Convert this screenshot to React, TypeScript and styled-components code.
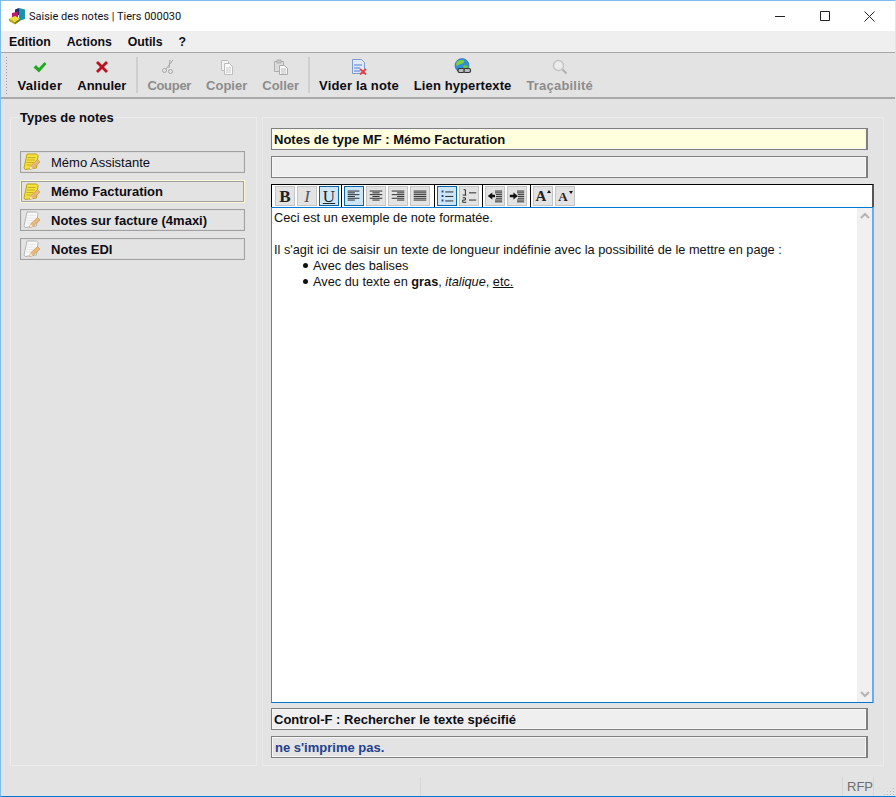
import React from 'react';
import styled, { createGlobalStyle } from 'styled-components';

const GlobalStyle = createGlobalStyle`
  html, body {
    margin: 0;
    padding: 0;
    background: #e3e3e3;
  }
  * {
    box-sizing: border-box;
  }
`;

const LogoIcon = () => (
  <svg width="17" height="18" viewBox="0 0 17 18">
    <path d="M10 1l6 1.500V12l-6 2z" fill="#1b93ad" />
    <path d="M6 2.500L10 1v7L6 9.500z" fill="#1d2f66" />
    <path d="M3 6l6-1.500V11l-6 2.500z" fill="#c0176c" />
    <path d="M0 11.500L6 9l5 2.500L6 15z" fill="#efe034" />
    <path d="M0 11.500L6 15v2.500L0 14z" fill="#b3a61d" />
    <path d="M6 15l5-3.500v2.500l-5 3.500z" fill="#857c12" />
  </svg>
);

const CheckIcon = () => (
  <svg width="16" height="16" viewBox="0 0 16 16">
    <path d="M1.500 8.500l2.500-2.500 3 3 5.500-6 2 2-7.500 8.500z" fill="#1faa1f" />
  </svg>
);

const CrossIcon = () => (
  <svg width="16" height="16" viewBox="0 0 16 16">
    <path d="M2 4l2-2 4 4 4-4 2 2-4 4 4 4-2 2-4-4-4 4-2-2 4-4z" fill="#b81420" />
  </svg>
);

const ScissorsIcon = () => (
  <svg width="16" height="16" viewBox="0 0 16 16" fill="none" stroke="#a6a6a6">
    <path d="M9 1l-1 8M12 1L5 10" />
    <circle cx="3.500" cy="11.500" r="2" />
    <circle cx="9.500" cy="12.500" r="2" />
  </svg>
);

const CopyIcon = () => (
  <svg width="16" height="16" viewBox="0 0 16 16" fill="#f2f2f2" stroke="#bdbdbd">
    <path d="M2.500 1.500h6l1 1v9h-7z" />
    <path d="M5.500 4.500h5l3 3v8h-8z" fill="#fafafa" />
    <path d="M7 9h5M7 11h5M7 13h5" strokeWidth="0.8" />
  </svg>
);

const PasteIcon = () => (
  <svg width="16" height="16" viewBox="0 0 16 16" fill="#dcdcdc" stroke="#adadad">
    <path d="M1.500 2.500h9v10h-9z" />
    <path d="M4 1h4v3H4z" fill="#c8c8c8" />
    <path d="M6.500 6.500h5l3 3v6h-8z" fill="#fafafa" />
    <path d="M8 10h5M8 12h5M8 14h5" strokeWidth="0.8" />
  </svg>
);

const ClearNoteIcon = () => (
  <svg width="16" height="16" viewBox="0 0 16 16">
    <path d="M1.500 .500h9l3 3v11h-12z" fill="#dfe8f8" stroke="#7f9bd0" />
    <path d="M3 6h8M3 9h6M3 12h6" stroke="#4f7fd8" strokeWidth="1.200" />
    <path d="M9 10l6 5.500M15 10l-6 5.500" stroke="#e8403c" strokeWidth="1.800" />
  </svg>
);

const LinkIcon = () => (
  <svg width="18" height="18" viewBox="0 0 18 18">
    <circle cx="8" cy="7.500" r="7" fill="#2f8fd8" stroke="#2a6f9f" strokeWidth="0.600" />
    <path d="M3 3.500c2-1.500 5-2 7-1 1 1.500-1 3-3 3.500S3 8 2.500 8C2 7 2 5 3 3.500z" fill="#7fd03a" />
    <path d="M10 7c2 0 3.500 .5 4 1.500-1 2-2.500 3-4 3.500-1-1-1-3.500 0-5z" fill="#6cc336" />
    <rect x="4" y="10.500" width="6.500" height="4" rx="1.500" fill="#b8bcc0" stroke="#333" strokeWidth="1.200" />
    <rect x="10" y="10.500" width="6.500" height="4" rx="1.500" fill="#b8bcc0" stroke="#333" strokeWidth="1.200" />
  </svg>
);

const LoupeIcon = () => (
  <svg width="16" height="16" viewBox="0 0 16 16">
    <circle cx="6.500" cy="6.500" r="5" fill="#ececec" stroke="#c4c4c4" strokeWidth="1.500" />
    <path d="M10.500 10.500l4 4" stroke="#b0b0b0" strokeWidth="2" />
  </svg>
);

const NoteIcon = ({ fill, edge, line }: { fill: string; edge: string; line: string }) => (
  <svg width="18" height="18" viewBox="0 0 18 18">
    <path d="M4 1h9.500l1.500 1.500-1.500 12.500-11.500 1.500L1 15z" fill={fill} stroke={edge} />
    <path d="M4.500 4.500h8M4 7h8M3.500 9.500h7M3.500 12h5" stroke={line} strokeWidth="0.800" />
    <path d="M6.500 16.500l1-3.500 7-6.500 2.500 2.500-7 6.500z" fill="#e8b878" stroke="#c8965c" strokeWidth="0.700" />
    <path d="M6.500 16.500l1-3.500 2.500 2.500z" fill="#f5e3c8" />
  </svg>
);

const GlyphLines = ({ kind }: { kind: 'left' | 'center' | 'right' | 'justify' }) => {
  const rows =
    kind === 'left'
      ? ['M3 4.500h13', 'M3 6.500h8', 'M3 8.500h13', 'M3 10.500h8', 'M3 12.500h13', 'M3 14.500h8']
      : kind === 'center'
        ? ['M3 4.500h14', 'M6 6.500h8', 'M3 8.500h14', 'M6 10.500h8', 'M3 12.500h14', 'M6 14.500h8']
        : kind === 'right'
          ? ['M3 4.500h14', 'M9 6.500h8', 'M3 8.500h14', 'M9 10.500h8', 'M3 12.500h14', 'M9 14.500h8']
          : ['M3 4.500h14', 'M3 6.500h14', 'M3 8.500h14', 'M3 10.500h14', 'M3 12.500h14', 'M3 14.500h14'];
  return (
    <svg width="18" height="18" viewBox="0 0 20 20" stroke="#1a1a1a" strokeWidth="1">
      {rows.map((d) => (
        <path key={d} d={d} />
      ))}
    </svg>
  );
};

const BulletsGlyph = () => (
  <svg width="20" height="20" viewBox="0 0 20 20">
    <path d="M8 5.500h9M8 10.500h9M8 15.500h9" stroke="#1a1a1a" />
    <path d="M4 4h2v2H4zM4 9h2v2H4zM4 14h2v2H4z" fill="#1f3f8f" />
  </svg>
);

const NumbersGlyph = () => (
  <svg width="20" height="20" viewBox="0 0 20 20">
    <path d="M10 6.500h8M10 14.500h8" stroke="#1a1a1a" />
    <path d="M4 3h2v6M3 9h4" stroke="#1a1a1a" fill="none" />
    <path d="M3 12h3v2.500H3V17h4" stroke="#1a1a1a" fill="none" />
  </svg>
);

const IndentGlyph = ({ out }: { out?: boolean }) => (
  <svg width="20" height="20" viewBox="0 0 20 20">
    <path d="M10 4.500h8M10 6.500h8M11 8.500h7M11 10.500h7M11 12.500h7M10 14.500h8M10 16.500h8" stroke="#1a1a1a" />
    {out ? (
      <path d="M2 10l5-4v2.500h3v3H7V14z" fill="#111" />
    ) : (
      <path d="M11 10L6 6v2.500H2v3h4V14z" fill="#111" />
    )}
  </svg>
);

const Window = styled.div`
  display: flex;
  flex-direction: column;
  width: 896px;
  height: 797px;
  overflow: hidden;
  background: #e3e3e3;
  border-top: 1px solid #7fbcec;
  border-bottom: 1px solid #0078d7;
  border-left: 1px solid #7fbcec;
  border-right: 1px solid #e3e3e3;
  font-family: 'Liberation Sans', Arial, sans-serif;
  color: #0c0c14;
`;

const TitleBar = styled.div`
  display: flex;
  align-items: center;
  height: 30px;
  flex: none;
  padding: 0 3px 0 8px;
  background: #fff;
`;

const WindowTitle = styled.span`
  margin-left: 3px;
  flex: 1;
  font-family: Roboto, sans-serif;
  font-size: 11px;
  color: #111;
`;

const WindowButton = styled.span`
  display: flex;
  align-items: center;
  justify-content: center;
  width: 45px;
  height: 30px;
`;

const MenuBar = styled.nav`
  display: flex;
  align-items: center;
  gap: 16px;
  height: 21px;
  flex: none;
  padding-left: 8px;
  background: #efefef;
  font-size: 12.3px;
  font-weight: bold;
  border-bottom: 1px solid #a8a8a8;
  box-sizing: content-box;
`;

const ToolBar = styled.div`
  display: flex;
  align-items: center;
  flex: none;
  height: 46px;
  padding-left: 4px;
  background: #e3e3e3;
  border-bottom: 2px solid #a9a9a9;
`;

const Grip = styled.span`
  width: 3px;
  height: 38px;
  margin-right: 2px;
  background-image: radial-gradient(#9a9a9a 0.8px, transparent 1px);
  background-size: 3px 3px;
`;

const ToolButton = styled.div<{ $disabled?: boolean; $tracking?: number }>`
  display: flex;
  flex-direction: column;
  align-items: center;
  gap: 1px;
  padding: 0 7.5px;
  font-size: 13px;
  font-weight: bold;
  line-height: 16px;
  letter-spacing: ${(p) => p.$tracking ?? 0}px;
  color: ${(p) => (p.$disabled ? '#8c8c8c' : '#0c0c14')};
`;

const ToolIcon = styled.span`
  display: flex;
  align-items: center;
  justify-content: center;
  height: 20px;
`;

const ToolSeparator = styled.span`
  width: 2px;
  height: 36px;
  margin: 0 2px;
  background: #cfcfcf;
`;

const Main = styled.main`
  display: flex;
  flex: 1;
  min-height: 0;
  gap: 5px;
  padding: 9px 11px 4px 9px;
`;

const TypesPanel = styled.fieldset`
  display: flex;
  flex-direction: column;
  width: 247px;
  flex: none;
  min-width: 0;
  margin: 0;
  padding: 25px 11px 0 9px;
  border: 1px solid #ebebeb;
`;

const PanelLegend = styled.legend`
  padding: 2px 0 0;
  margin-left: 0;
  font-size: 13px;
  font-weight: bold;
  line-height: 16px;
`;

const NoteList = styled.div`
  display: flex;
  flex-direction: column;
  gap: 7px;
`;

const NoteButton = styled.div<{ $selected?: boolean; $bold?: boolean }>`
  display: flex;
  align-items: center;
  gap: 10px;
  height: ${(p) => (p.$selected ? 23 : 22)}px;
  margin-bottom: ${(p) => (p.$selected ? -1 : 0)}px;
  padding-left: 2px;
  border: 1px solid ${(p) => (p.$selected ? '#fbf8d8' : '#a0a0a0')};
  box-shadow: ${(p) => (p.$selected ? 'inset 0 0 0 1px #a0a0a0' : 'inset 0 0 0 1px #dcdcdc')};
  font-size: 13px;
  font-weight: ${(p) => (p.$bold ? 'bold' : 'normal')};
`;

const EditorPanel = styled.section`
  display: flex;
  flex-direction: column;
  flex: 1;
  min-width: 0;
  margin-top: 9px;
  padding: 10px 9px 1px 8px;
  border: 1px solid #ebebeb;
`;

const Field = styled.div<{ $bg?: string; $color?: string; $inset?: number }>`
  display: flex;
  align-items: center;
  flex: none;
  height: 22px;
  margin-right: 6px;
  margin-bottom: 6px;
  padding-left: ${(p) => p.$inset ?? 2}px;
  border: 1px solid #808080;
  border-right-width: 2px;
  box-shadow: inset 0 0 0 1px #f6f6f6;
  background: ${(p) => p.$bg || '#efefef'};
  color: ${(p) => p.$color || '#0c0c14'};
  font-size: 13px;
  font-weight: bold;
`;

const FormatBar = styled.div`
  display: flex;
  align-items: center;
  flex: none;
  height: 23px;
  padding-left: 3px;
  background: #fff;
  border: 1px solid #000;
  border-bottom: 0;
  border-right: 2px solid #555;
`;

const FormatButton = styled.span<{ $active?: boolean }>`
  display: flex;
  align-items: center;
  justify-content: center;
  width: 20px;
  height: 20px;
  margin-right: 2px;
  border: 1px solid ${(p) => (p.$active ? '#0a64a4' : '#c4c4c4')};
  background: ${(p) => (p.$active ? '#cde6f7' : '#e3e3e3')};
  font-family: 'Liberation Serif', serif;
  font-size: 17px;
  line-height: 1;
  color: #222;
`;

const FormatDivider = styled.span<{ $before?: number }>`
  width: 1px;
  height: 22px;
  margin: 0 2px 0 ${(p) => p.$before ?? 0}px;
  background: #000;
`;

const ItalicLetter = styled.i`
  color: #555;
`;

const UnderLetter = styled.u`
  color: #222;
`;

const SizeLetter = styled.b<{ $small?: boolean }>`
  position: relative;
  font-size: ${(p) => (p.$small ? 13 : 15)}px;
  margin-right: 4px;

  &::after {
    content: '';
    position: absolute;
    top: 1px;
    left: 100%;
    margin-left: 1px;
    border-left: 2px solid transparent;
    border-right: 2px solid transparent;
    ${(p) =>
      p.$small ? 'border-top: 3px solid #111;' : 'border-bottom: 3px solid #111;'}
  }
`;

const EditorBox = styled.div`
  display: flex;
  flex: 1;
  min-height: 0;
  margin-bottom: 5px;
  background: #fff;
  border: 1px solid #0078d7;
  border-left-color: #2f8fe0;
  border-right: 2px solid #6aaee6;
`;

const EditorText = styled.div`
  flex: 1;
  padding: 2px 0 0 2px;
  font-size: 12.75px;
  line-height: 16px;
  color: #111;
`;

const EditorLine = styled.div`
  min-height: 16px;
`;

const BulletList = styled.ul`
  margin: 0;
  padding: 0 0 0 29px;
  list-style: none;
`;

const BulletItem = styled.li`
  &::before {
    content: '';
    display: inline-block;
    width: 5px;
    height: 5px;
    margin: 0 5px 2px 0;
    border-radius: 50%;
    background: #111;
  }
`;

const Scrollbar = styled.div`
  display: flex;
  flex-direction: column;
  justify-content: space-between;
  align-items: center;
  width: 15px;
  flex: none;
  padding: 4px 0;
  background: #f0f0f0;
`;

const StatusBar = styled.footer`
  display: flex;
  align-items: stretch;
  flex: none;
  height: 26px;
  padding-top: 7px;
`;

const StatusCell = styled.span<{ $width?: number }>`
  display: flex;
  align-items: center;
  justify-content: flex-end;
  width: ${(p) => (p.$width ? `${p.$width}px` : 'auto')};
  flex: ${(p) => (p.$width ? 'none' : 1)};
  border-right: 1px solid #d6d6d6;
  font-size: 13px;
  color: #6e6e6e;
`;

const ResizeGrip = styled.span`
  width: 21px;
  flex: none;
  background-image: radial-gradient(#b8b8b8 0.9px, transparent 1px);
  background-size: 3px 3px;
  background-position: right bottom;
  clip-path: polygon(100% 40%, 100% 100%, 40% 100%);
`;

const TightSeparator = styled(ToolSeparator)`
  margin: 0 2px 0 1px;
`;

const chevron = (d: string) => (
  <svg width="10" height="8" viewBox="0 0 10 8" fill="none" stroke="#b4b4b4" strokeWidth="2">
    <path d={d} />
  </svg>
);

export default function App() {
  return (
    <Window>
      <GlobalStyle />
      <TitleBar>
        <LogoIcon />
        <WindowTitle>Saisie des notes | Tiers 000030</WindowTitle>
        <WindowButton>
          <svg width="10" height="10" viewBox="0 0 10 10" stroke="#222">
            <path d="M0 5.500h10" />
          </svg>
        </WindowButton>
        <WindowButton>
          <svg width="10" height="10" viewBox="0 0 10 10" stroke="#222" fill="none">
            <path d="M.500 .500h9v9h-9z" />
          </svg>
        </WindowButton>
        <WindowButton>
          <svg width="11" height="11" viewBox="0 0 11 11" stroke="#222">
            <path d="M.500 .500l10 10M10.500 .500l-10 10" />
          </svg>
        </WindowButton>
      </TitleBar>
      <MenuBar>
        <span>Edition</span>
        <span>Actions</span>
        <span>Outils</span>
        <span>?</span>
      </MenuBar>
      <ToolBar>
        <Grip />
        <ToolButton $tracking={0.3}>
          <ToolIcon>
            <CheckIcon />
          </ToolIcon>
          Valider
        </ToolButton>
        <ToolButton>
          <ToolIcon>
            <CrossIcon />
          </ToolIcon>
          Annuler
        </ToolButton>
        <ToolSeparator />
        <ToolButton $disabled $tracking={-0.3}>
          <ToolIcon>
            <ScissorsIcon />
          </ToolIcon>
          Couper
        </ToolButton>
        <ToolButton $disabled>
          <ToolIcon>
            <CopyIcon />
          </ToolIcon>
          Copier
        </ToolButton>
        <ToolButton $disabled>
          <ToolIcon>
            <PasteIcon />
          </ToolIcon>
          Coller
        </ToolButton>
        <TightSeparator />
        <ToolButton $tracking={0.15}>
          <ToolIcon>
            <ClearNoteIcon />
          </ToolIcon>
          Vider la note
        </ToolButton>
        <ToolButton $tracking={0.1}>
          <ToolIcon>
            <LinkIcon />
          </ToolIcon>
          Lien hypertexte
        </ToolButton>
        <ToolButton $disabled $tracking={0.2}>
          <ToolIcon>
            <LoupeIcon />
          </ToolIcon>
          Traçabilité
        </ToolButton>
      </ToolBar>
      <Main>
        <TypesPanel>
          <PanelLegend>Types de notes</PanelLegend>
          <NoteList>
            <NoteButton>
              <NoteIcon fill="#f6e23a" edge="#b9a21e" line="#b9a21e" />
              Mémo Assistante
            </NoteButton>
            <NoteButton $selected $bold>
              <NoteIcon fill="#f6e23a" edge="#b9a21e" line="#b9a21e" />
              Mémo Facturation
            </NoteButton>
            <NoteButton $bold>
              <NoteIcon fill="#f8f8f8" edge="#b4b4b4" line="#e2e2e2" />
              Notes sur facture (4maxi)
            </NoteButton>
            <NoteButton $bold>
              <NoteIcon fill="#f8f8f8" edge="#b4b4b4" line="#e2e2e2" />
              Notes EDI
            </NoteButton>
          </NoteList>
        </TypesPanel>
        <EditorPanel>
          <Field $bg="#ffffde">Notes de type MF : Mémo Facturation</Field>
          <Field />
          <FormatBar>
            <FormatButton>
              <b>B</b>
            </FormatButton>
            <FormatButton>
              <ItalicLetter>I</ItalicLetter>
            </FormatButton>
            <FormatButton $active>
              <UnderLetter>U</UnderLetter>
            </FormatButton>
            <FormatDivider />
            <FormatButton $active>
              <GlyphLines kind="left" />
            </FormatButton>
            <FormatButton>
              <GlyphLines kind="center" />
            </FormatButton>
            <FormatButton>
              <GlyphLines kind="right" />
            </FormatButton>
            <FormatButton>
              <GlyphLines kind="justify" />
            </FormatButton>
            <FormatDivider $before={2} />
            <FormatButton $active>
              <BulletsGlyph />
            </FormatButton>
            <FormatButton>
              <NumbersGlyph />
            </FormatButton>
            <FormatDivider $before={1} />
            <FormatButton>
              <IndentGlyph out />
            </FormatButton>
            <FormatButton>
              <IndentGlyph />
            </FormatButton>
            <FormatDivider $before={1} />
            <FormatButton>
              <SizeLetter>A</SizeLetter>
            </FormatButton>
            <FormatButton>
              <SizeLetter $small>A</SizeLetter>
            </FormatButton>
          </FormatBar>
          <EditorBox>
            <EditorText>
              <EditorLine>Ceci est un exemple de note formatée.</EditorLine>
              <EditorLine />
              <EditorLine>
                Il s'agit ici de saisir un texte de longueur indéfinie avec la possibilité de le mettre en page :
              </EditorLine>
              <BulletList>
                <BulletItem>Avec des balises</BulletItem>
                <BulletItem>
                  Avec du texte en <b>gras</b>, <i>italique</i>, <u>etc.</u>
                </BulletItem>
              </BulletList>
            </EditorText>
            <Scrollbar>
              {chevron('M1 6l4-4 4 4')}
              {chevron('M1 2l4 4 4-4')}
            </Scrollbar>
          </EditorBox>
          <Field>Control-F : Rechercher le texte spécifié</Field>
          <Field $bg="#e3e3e3" $color="#24408e" $inset={3}>
            ne s'imprime pas.
          </Field>
        </EditorPanel>
      </Main>
      <StatusBar>
        <StatusCell $width={420} />
        <StatusCell />
        <StatusCell $width={31}>RFP</StatusCell>
        <ResizeGrip />
      </StatusBar>
    </Window>
  );
}
